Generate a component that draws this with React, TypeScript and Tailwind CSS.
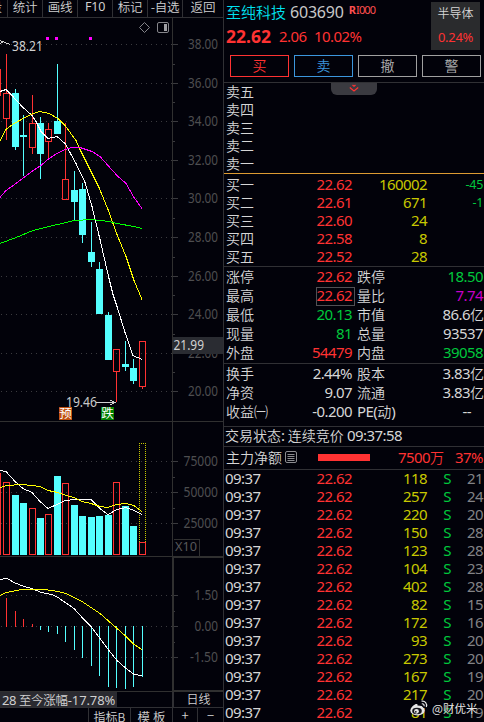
import React from "react";

const LATIN = "font-['Noto_Sans','Noto_Sans_CJK_SC',sans-serif]";
const HAN = "font-['Noto_Sans_CJK_SC',sans-serif]";

function N({ c = "", children }: { c?: string; children: React.ReactNode }) {
  return <span className={`${LATIN} text-[15px] tracking-[-0.58px] whitespace-pre ${c}`}>{children}</span>;
}
function H({ c = "", size = "text-[14px]", children }: { c?: string; size?: string; children: React.ReactNode }) {
  return <span className={`${HAN} ${size} font-[350] whitespace-pre ${c}`}>{children}</span>;
}

const RED = "text-[#ff3232]";
const GREEN = "text-[#00c83c]";
const YEL = "text-[#c8c800]";
const LINE = "border-[#303034]";

type Bar = [x: number, up: boolean, high: number, top: number, bottom: number, low: number, volTop: number];
const bars: Bar[] = [
  [-6, true, 69, 69, 96, 96, 473],
  [3, true, 54, 93, 119, 140, 482],
  [12, false, 89, 93, 147, 150, 495],
  [20, false, 115, 135, 137, 176, 503],
  [29, true, 95, 123, 148, 154, 508],
  [37, false, 117, 123, 154, 179, 518],
  [45, true, 123, 129, 142, 159, 514],
  [54, false, 64, 121, 134, 134, 476],
  [62, true, 123, 179, 200, 200, 483],
  [71, false, 171, 190, 202, 221, 505],
  [79, false, 183, 189, 235, 243, 516],
  [88, false, 222, 252, 262, 267, 517],
  [96, false, 262, 269, 314, 314, 516],
  [105, false, 312, 315, 360, 360, 515],
  [113, true, 349, 349, 372, 402, 482],
  [122, false, 341, 364, 367, 371, 506],
  [130, false, 359, 368, 381, 384, 526],
  [139, true, 341, 341, 387, 389, 542],
];
const macd: [number, number][] = [
  [6, 598], [15, 611], [23, 619], [32, 624], [40, 630], [48, 632], [57, 634], [65, 642], [74, 650],
  [82, 658], [91, 666], [99, 676], [108, 687], [116, 688], [125, 689], [133, 687], [142, 677],
];
const lines: [string, string][] = [
  ["#fff", "0,91 6,89 12,95 22,106 32,115 36,121 41,131 48,138 57,136 65,143 76,163 85,182 92,206 100,239 109,278 113,294 117,306 125,332 133,355 142,359"],
  ["#ff0", "0,140 6,129 14,123 27,116 33,113 40,111 49,113 58,118 65,125 76,140 80,149 99,187 108,209 117,234 126,256 134,280 142,299"],
  ["#f0f", "0,197 6,190 16,183 24,177 33,170 41,165 49,158 57,153 65,149 72,147 80,147 92,151 100,156 108,165 117,175 126,183 134,197 142,208"],
  ["#0f0", "0,243 16,237 33,230 49,226 66,222 74,220 92,219 109,221 117,223 134,226 142,228"],
  ["#fff", "0,470 6,471 15,481 23,488 32,492 40,501 48,508 57,504 65,500 75,499 91,499 100,508 108,514 117,509 126,507 134,510 142,514"],
  ["#ff0", "0,487 7,485 22,484 40,486 48,490 58,492 66,495 74,497 82,501 91,503 100,506 108,507 116,504 126,503 134,505 142,511"],
  ["#fff", "0,579 7,578 14,582 24,586 32,588 41,592 52,594 58,597 74,608 83,618 91,626 100,638 109,650 117,660 125,667 134,674 142,675"],
  ["#ff0", "0,595 6,592 22,589 45,589 58,591 66,593 74,597 82,601 91,607 100,613 108,620 117,628 126,636 134,644 142,649"],
];
const axis: [number, string, number][] = [
  [44, "38.00", 30], [83, "36.00", 30], [121, "34.00", 30], [160, "32.00", 30], [198, "30.00", 30],
  [237, "28.00", 30], [276, "26.00", 30], [314, "24.00", 30], [353, "22.00", 30], [391, "20.00", 30],
  [461, "75000", 34.5], [492, "50000", 34.5], [523, "25000", 34.5],
  [595, "1.50", 23.5], [626, "0.00", 23.5], [657, "-1.50", 28],
];
const minor = [64, 102, 141, 179, 218, 257, 295, 334, 372, 477, 508, 611, 642];
const numFont = "'Noto Sans', sans-serif";

function Chart() {
  return (
    <svg width="224" height="674" viewBox="0 18 224 674" className="block shrink-0" shapeRendering="crispEdges">
      {axis.map(([y]) => (
        <g key={y} stroke="#3a3a3e">
          <line x1="1" x2="172" y1={y + 0.5} y2={y + 0.5} strokeDasharray="1 4" />
          <line x1="173" x2="178" y1={y + 0.5} y2={y + 0.5} />
        </g>
      ))}
      {minor.map((y) => <rect key={y} x="173" y={y} width="2" height="1" fill="#3a3a3e" />)}
      <g fill="#303030">
        <rect x="172" y="18" width="1" height="539" />
        <rect x="0" y="421" width="223" height="1" />
        <rect x="0" y="556" width="223" height="1" />
        <rect x="173" y="556" width="50" height="2" />
        <rect x="172" y="556" width="2" height="136" />
        <rect x="173" y="690" width="50" height="1" />
        <rect x="0" y="691" width="223" height="1" />
      </g>
      {axis.map(([y, t, w]) => (
        <text key={t} x={218 - w} y={y + 4.5} fontSize="14" fontFamily={numFont} fill="#4e4e50" textLength={w} lengthAdjust="spacingAndGlyphs">{t}</text>
      ))}
      <path d="M173.5 539.5H199.5V556" fill="none" stroke="#303030" />
      <text x="175" y="551" fontSize="13" fontFamily={numFont} fill="#58585a" textLength="22" lengthAdjust="spacingAndGlyphs">X10</text>

      {bars.map(([x, up, high, top, bottom, low, v]) =>
        up ? (
          <g key={x} fill="none" stroke="#ff3232">
            {high < top && <line x1={x + 3.5} x2={x + 3.5} y1={high} y2={top} />}
            {low > bottom && <line x1={x + 3.5} x2={x + 3.5} y1={bottom} y2={low} />}
            <rect x={x + 0.5} y={top + 0.5} width="6" height={bottom - top - 1} />
            <rect x={x + 0.5} y={v + 0.5} width="6" height={554 - v} />
          </g>
        ) : (
          <g key={x} fill="#54ffff">
            <rect x={x + 3} y={high} width="1" height={low - high} />
            <rect x={x} y={top} width="7" height={bottom - top} />
            <rect x={x} y={v} width="7" height={555 - v} />
          </g>
        )
      )}
      <path d="M139.5 542V443.5H145.5V542" fill="none" stroke="#c8c800" strokeDasharray="1 1" />
      {macd.map(([x, y]) =>
        y < 626 ? <rect key={x} x={x} y={y} width="1" height={627 - y} fill="#ff3232" />
          : <rect key={x} x={x} y="626" width="1" height={y - 626} fill="#54ffff" />
      )}
      <g transform="translate(0 .5)" fill="none">
        {lines.map(([c, p]) => <polyline key={p} points={p} stroke={c} />)}
      </g>

      <g fill="#f0f">
        <rect x="46" y="37" width="3" height="3" />
        <rect x="55" y="37" width="3" height="3" />
        <rect x="89" y="37" width="3" height="3" />
      </g>
      <g fill="none" stroke="#85858a" shapeRendering="auto">
        <path d="M144.500 22.500L149.500 27.500L144.500 32.500L139.500 27.500Z" />
        <rect x="157.500" y="22.500" width="11" height="10" rx="1.500" />
      </g>
      <rect x="164" y="24" width="3" height="7" fill="#a0a0a4" />
      <path d="M0 40.500L10 44.500M0 43.500L4 41" stroke="#d0d0d0" fill="none" />
      <text x="12" y="51" fontSize="13.5" fontFamily={numFont} fill="#d0d0d0" textLength="31" lengthAdjust="spacingAndGlyphs">38.21</text>
      <text x="66" y="407" fontSize="13.5" fontFamily={numFont} fill="#c8c8c8" textLength="31" lengthAdjust="spacingAndGlyphs">19.46</text>
      <path d="M96 402.500H115M110 400L115 402.500L110 405" stroke="#d0d0d0" fill="none" />
      <rect x="59" y="407" width="13" height="13" fill="#c05010" />
      <rect x="101" y="407" width="13" height="13" fill="#008000" />
      <g fontSize="12.5" fontFamily="'Noto Sans CJK SC', sans-serif" fill="#fff">
        <text x="59.200" y="418">预</text>
        <text x="101.200" y="418">跌</text>
      </g>
      <rect x="173" y="337" width="50" height="17" fill="#2a2c32" />
      <text x="173.500" y="350" fontSize="13.5" fontFamily={numFont} fill="#d0d0d0" textLength="30.500" lengthAdjust="spacingAndGlyphs">21.99</text>
    </svg>
  );
}

function QuoteRow({ l, p, v, d }: { l: string; p?: string; v?: string; d?: string }) {
  return (
    <div className="flex h-[18px] items-start leading-[16px]">
      <H c={`w-[60px] ${G}`}>{l}</H>
      <N c={`w-[66px] text-right ${RED}`}>{p}</N>
      <N c={`w-[75px] text-right ${YEL}`}>{v}</N>
      <span className={`${LATIN} w-[56px] pt-px text-right text-[12.500px] tracking-[-0.3px] ${GREEN}`}>{d}</span>
    </div>
  );
}

type Stat = [l: string, v: string, c: string, l2: string, v2: string, unit: string, c2: string];
const G = "text-[#d6d6d6]";
const stats: Stat[] = [
  ["涨停", "22.62", RED, "跌停", "18.50", "", GREEN],
  ["最高", "22.62", RED, "量比", "7.74", "", "text-[#c800c8]"],
  ["最低", "20.13", GREEN, "市值", "86.6", "亿", G],
  ["现量", "81", GREEN, "总量", "93537", "", G],
  ["外盘", "54479", RED, "内盘", "39058", "", GREEN],
];
const stats2: Stat[] = [
  ["换手", "2.44%", G, "股本", "3.83", "亿", G],
  ["净资", "9.07", G, "流通", "3.83", "亿", G],
  ["收益㈠", "-0.200", G, "PE(动)", "--", "", G],
];
function StatRow({ s }: { s: Stat }) {
  const boxed = s[0] === "最高";
  const dash = s[4] === "--";
  return (
    <div className="flex h-[19px] items-start leading-[17px]">
      <H c={`w-[60px] ${G}`}>{s[0]}</H>
      <div className="flex w-[69px] justify-end">
        <span className={`flex h-[19px] items-start border pr-[2px] leading-[15px] ${boxed ? "border-[#505054]" : "border-transparent"}`}>
          <N c={s[2]}>{s[1]}</N>
        </span>
      </div>
      {dash ? <span className={`ml-[2px] w-[50px] whitespace-nowrap ${G}`}><N>PE(</N><H>动</H><N>)</N></span>
        : <H c={`ml-[2px] w-[50px] ${G}`}>{s[3]}</H>}
      <div className={`flex w-[77px] items-baseline justify-end whitespace-nowrap ${s[6]} ${dash ? "pr-[13px]" : s[5] ? "" : "pr-px"}`}>
        <N>{s[4]}</N>{s[5] && <H>{s[5]}</H>}
      </div>
    </div>
  );
}

const trades = [["118", "21"], ["257", "24"], ["220", "20"], ["150", "28"], ["123", "28"], ["104", "23"], ["402", "28"],
  ["82", "15"], ["172", "16"], ["93", "20"], ["273", "20"], ["167", "19"], ["217", "20"], ["81", "19"]];
const actions = [
  ["买", "border-[#ff3232] text-[#ff3232]"],
  ["卖", "border-[#3c96dc] text-[#3c96dc]"],
  ["撤", "border-[#a0a0a0] text-[#b0b0b0]"],
  ["警", "border-[#a0a0a0] text-[#b0b0b0]"],
];

export default function App() {
  return (
    <div className="relative flex h-[722px] w-[484px] overflow-hidden bg-[#02020a]">
      <div className="flex w-[223px] shrink-0 flex-col overflow-hidden">
        <div className={`flex h-[18px] shrink-0 border-b ${LINE} text-[#d0d0d0] leading-[14px]`}>
          <div className={`flex w-[8px] justify-end overflow-hidden border-r ${LINE} pr-[5px]`}><H size="text-[12.500px]">段</H></div>
          {["统计", "画线", "F10", "标记", "-自选"].map((t) => (
            <div key={t} className={`flex w-[35px] justify-center border-r ${LINE}`}>
              <span className={`${t === "F10" ? LATIN : HAN} text-[12.500px] tracking-[-0.2px] whitespace-nowrap ${t === "F10" ? "" : "font-[350]"}`}>{t}</span>
            </div>
          ))}
          <div className="flex w-[40px] justify-center"><H size="text-[12.500px]">返回</H></div>
        </div>
        <Chart />
        <div className={`flex h-[16px] shrink-0 border-b ${LINE} leading-[14px] text-[#d0d0d0]`}>
          <div className="w-[117px] bg-[#2a2a30] pl-[2px] whitespace-nowrap">
            <span className={`${LATIN} text-[13px] tracking-[-0.45px]`}>28 </span>
            <span className={`${HAN} text-[12.500px] font-[350] tracking-[-0.3px]`}>至今涨幅</span>
            <span className={`${LATIN} text-[13px] tracking-[-0.1px]`}>-17.78%</span>
          </div>
          <div className={`ml-auto flex w-[51px] justify-center border-l-2 ${LINE}`}><H size="text-[12px]">日线</H></div>
        </div>
        <div className="flex h-[14px] shrink-0 overflow-hidden text-[#d0d0d0] leading-[17px]">
          <div className={`w-[89px] border-r ${LINE}`} />
          <div className={`flex w-[42px] justify-center border-r ${LINE}`}><H size="text-[12px]">指标B</H></div>
          <div className={`flex w-[42px] justify-center border-r ${LINE}`}><H size="text-[12.500px]">模 板</H></div>
          <div className={`flex w-[25px] justify-center border-r ${LINE} leading-[14px]`}><H size="text-[13px]">+</H></div>
          <div className="flex w-[25px] justify-center leading-[14px]"><H size="text-[13px]">−</H></div>
        </div>
      </div>

      <div className={`flex w-[261px] shrink-0 flex-col border-l ${LINE} pl-[2px]`}>
        <div className="flex h-[55px] shrink-0">
          <div className="flex w-[205px] flex-col">
            <div className="flex h-[23px] items-center leading-[22px] whitespace-nowrap">
              <span className={`${HAN} text-[15px] font-[350] text-[#00e1f0]`}>至纯科技</span>
              <span className={`${LATIN} ml-[4px] text-[16px] tracking-[-0.2px] text-[#c8c8c8]`}>603690</span>
              <span className={`${LATIN} ml-[5px] self-start text-[11px] leading-[20px] tracking-[-0.9px] text-[#ff5050]`}><b className="mr-px">R</b>I000</span>
            </div>
            <div className={`flex h-[27px] items-center leading-[27px] ${LATIN} ${RED} whitespace-nowrap`}>
              <b className="w-[53px] text-[17.500px]">22.62</b>
              <N c="w-[35px]">2.06</N>
              <N>10.02%</N>
            </div>
          </div>
          <div className="mt-[2px] flex h-[48px] w-[49px] flex-col items-center bg-[#2a2b2d]">
            <span className={`${HAN} text-[12px] leading-[22px] font-[350] ${G}`}>半导体</span>
            <span className={`${LATIN} mt-px text-[13px] leading-[24px] tracking-[-0.3px] ${RED}`}>0.24%</span>
          </div>
        </div>
        <div className="flex h-[27px] shrink-0 gap-[5px] pl-[4px]">
          {actions.map(([t, c]) => (
            <div key={t} className={`flex h-[22px] w-[59px] items-start justify-center border ${c}`}><H c="leading-[19px]">{t}</H></div>
          ))}
        </div>
        <div className={`-ml-[2px] border-t ${LINE}`} />
        <div className="relative h-[90px] shrink-0">
          <div className="absolute top-0 left-[105px] flex h-[12px] w-[46px] justify-center rounded-b-[6px] bg-[#3a3a40]">
            <svg width="12" height="12" viewBox="0 0 12 12" fill="none" stroke="#ff3232" strokeWidth="1.200">
              <path d="M4.500 2L6 3.300L7.500 2M1.800 4.500L6 8L10.200 4.500" />
            </svg>
          </div>
          {["卖五", "卖四", "卖三", "卖二", "卖一"].map((l) => <QuoteRow key={l} l={l} />)}
        </div>
        <div className="-ml-[2px] mb-[2px] shrink-0 border-t border-[#dc9b32]" />
        <div className="h-[90px] shrink-0">
          <QuoteRow l="买一" p="22.62" v="160002" d="-45" />
          <QuoteRow l="买二" p="22.61" v="671" d="-1" />
          <QuoteRow l="买三" p="22.60" v="24" />
          <QuoteRow l="买四" p="22.58" v="8" />
          <QuoteRow l="买五" p="22.52" v="28" />
        </div>
        <div className={`-ml-[2px] mb-px border-t ${LINE}`} />
        <div className="h-[95px] shrink-0">{stats.map((s) => <StatRow key={s[0]} s={s} />)}</div>
        <div className={`-ml-[2px] mb-px border-t ${LINE}`} />
        <div className="h-[61px] shrink-0">{stats2.map((s) => <StatRow key={s[0]} s={s} />)}</div>
        <div className={`-ml-[2px] h-[21px] shrink-0 border-y ${LINE} pl-px leading-[17px] whitespace-nowrap ${G}`}>
          <H>交易状态</H><N>: </N><H>连续竞价</H><N> 09:37:58</N>
        </div>
        <div className={`-ml-[2px] flex h-[23px] shrink-0 items-center border-b ${LINE} pb-[2px] pl-[2px] leading-[20px] whitespace-nowrap`}>
          <H c={G}>主力净额</H>
          <svg className="ml-[3px]" width="12" height="12" viewBox="0 0 12 12" fill="none" stroke="#8c8c90">
            <rect x=".5" y=".5" width="11" height="11" rx="1.500" />
            <path d="M2.500 3.500H9.500M2.500 5.500H9.500M2.500 7.500H9.500M2.500 9.500H9.500" />
          </svg>
          <div className="ml-[21px] h-[7px] w-[52px] bg-[#ff3232]" />
          <div className={`ml-auto pr-px ${RED}`}><N>7500</N><H c="mr-[11px]">万</H><N>37%</N></div>
        </div>
        <div className="h-[252px] shrink-0">
          {trades.map(([v, n], i) => (
            <div key={i} className="flex h-[18px] items-start leading-[16px]">
              <N c={`-ml-px w-[61px] ${G}`}>09:37</N>
              <N c={`w-[66px] text-right ${RED}`}>22.62</N>
              <N c={`w-[75px] text-right ${YEL}`}>{v}</N>
              <N c={`w-[24px] text-right ${GREEN}`}>S</N>
              <N c="w-[32px] text-right text-[#828286]">{n}</N>
            </div>
          ))}
        </div>
      </div>

      <div className="absolute top-[698px] left-[410px] flex items-center gap-[4px] text-[#e6e6e6]">
        <svg width="18" height="17" viewBox="0 0 18 17" fill="none">
          <ellipse cx="7.500" cy="10.500" rx="7.200" ry="5" fill="#e6e6e6" />
          <path d="M1 9C2 6 6 3 7.500 4.500L7.500 6.500C10 5.500 13 5.500 12.500 8Z" fill="#e6e6e6" />
          <ellipse cx="7" cy="11" rx="4.800" ry="3.300" fill="#15151c" />
          <circle cx="6.500" cy="11.300" r="2.400" fill="#e6e6e6" />
          <circle cx="5.800" cy="11.800" r=".9" fill="#15151c" />
          <path d="M11.500 1.200C15 .5 17.500 3.500 16.300 7M11.800 3.800C13.500 3.500 14.500 4.800 14 6.300" stroke="#e6e6e6" strokeWidth="1.200" />
        </svg>
        <span className={`${HAN} text-[11.500px] leading-[20px] whitespace-nowrap [text-shadow:0_0_2px_#000]`}>@财优米</span>
      </div>
    </div>
  );
}
